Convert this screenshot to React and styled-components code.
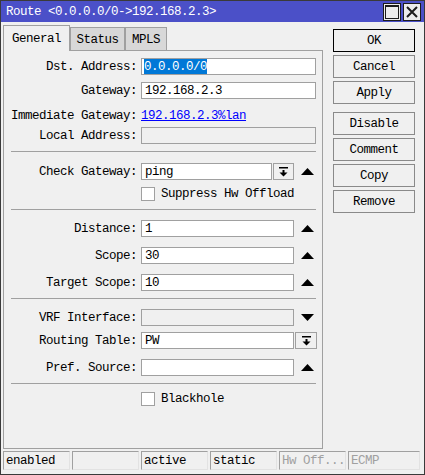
import React from "react";
import styled, { createGlobalStyle } from "styled-components";

const GlobalStyle = createGlobalStyle`
  html, body { margin: 0; padding: 0; background: #f0f0f0; }
  body { font-family: "Liberation Mono", "DejaVu Sans Mono", monospace; }
`;

const Window = styled.div`
  width: 425px;
  height: 475px;
  box-sizing: border-box;
  border: 1px solid #3a3a3a;
  background: #f0f0f0;
  display: flex;
  flex-direction: column;
  font-family: "Liberation Mono", "DejaVu Sans Mono", monospace;
  font-size: 12.5px;
  letter-spacing: -0.5px;
  color: #000;
`;

const TitleBar = styled.div`
  height: 21px;
  flex: none;
  background: #4b50c8;
  color: #fff;
  display: flex;
  align-items: center;
  padding: 0 3px 0 5px;
`;

const TitleText = styled.div`
  flex: 1;
  white-space: pre;
`;

const TitleButtons = styled.div`
  display: flex;
  gap: 2px;
  align-self: flex-start;
  margin-top: 2px;
`;

const TitleButton = styled.div`
  width: 18px;
  height: 18px;
  box-sizing: border-box;
  border: 1px solid #1c1c1c;
  background: #ececec;
  display: flex;
  align-items: center;
  justify-content: center;
`;

const Main = styled.div`
  display: flex;
  padding: 3px 0 0 2px;
  flex: none;
`;

const LeftCol = styled.div`
  width: 320px;
  display: flex;
  flex-direction: column;
`;

const Tabs = styled.div`
  display: flex;
  height: 26px;
  margin-bottom: -1px;
  align-items: flex-start;
`;

const Tab = styled.div`
  width: ${(p) => p.$w}px;
  box-sizing: border-box;
  display: flex;
  align-items: center;
  justify-content: center;
  border: 1px solid #a0a0a0;
  ${(p) =>
    p.$active
      ? `
    height: 26px;
    border-bottom: none;
    background: #f0f0f0;
    position: relative;
    z-index: 1;
  `
      : `
    height: 24px;
    margin-top: 2px;
    padding-top: 2px;
    background: #d8d8d8;
  `}
`;

const Panel = styled.div`
  height: 399px;
  box-sizing: border-box;
  border: 1px solid #a0a0a0;
  display: flex;
  flex-direction: column;
`;

const Section = styled.div`
  display: flex;
  flex-direction: column;
  padding: ${(p) => p.$pt}px 0 ${(p) => p.$pb}px;
`;

const Divider = styled.div`
  height: 1px;
  background: #a0a0a0;
  margin: 0 6px 0 7px;
`;

const Row = styled.div`
  display: grid;
  grid-template-columns: 133px auto;
  column-gap: 4px;
  align-items: center;
  height: ${(p) => p.$h || 17}px;
  margin-top: ${(p) => p.$mt || 0}px;
`;

const Label = styled.div`
  text-align: right;
  white-space: pre;
`;

const Controls = styled.div`
  display: flex;
  align-items: center;
  height: 100%;
`;

const Field = styled.div`
  width: ${(p) => p.$w}px;
  height: 17px;
  box-sizing: border-box;
  border: 1px solid #a0a0a0;
  background: ${(p) => (p.$disabled ? "#f0f0f0" : "#fff")};
  padding-left: 3px;
  display: flex;
  align-items: center;
  white-space: pre;
  overflow: hidden;
`;

const Selected = styled.span`
  align-self: stretch;
  display: flex;
  align-items: center;
  margin-left: -1px;
  background: #0078d7;
  color: #fff;
`;

const Link = styled.span`
  color: #0000ff;
  text-decoration: underline;
  white-space: pre;
`;

const DropButton = styled.div`
  width: ${(p) => p.$w}px;
  height: 17px;
  box-sizing: border-box;
  margin-left: 1px;
  border: 1px solid #a0a0a0;
  background: #f0f0f0;
  display: flex;
  align-items: center;
  justify-content: center;
`;

const ArrowSlot = styled.div`
  width: 22px;
  box-sizing: border-box;
  padding-left: 7px;
  display: flex;
  align-items: center;
`;

const CheckRow = styled.div`
  display: flex;
  align-items: center;
  gap: 6px;
`;

const CheckBox = styled.div`
  width: 14px;
  height: 14px;
  box-sizing: border-box;
  border: 1px solid #a0a0a0;
  background: #fff;
`;

const RightCol = styled.div`
  width: 82px;
  margin: 4px 0 0 10px;
  display: flex;
  flex-direction: column;
`;

const Button = styled.div`
  height: 23px;
  box-sizing: border-box;
  margin-top: ${(p) => p.$mt}px;
  border: 1px solid ${(p) => (p.$default ? "#000" : "#8a8a8a")};
  background: #f0f0f0;
  display: flex;
  align-items: center;
  justify-content: center;
`;

const StatusBar = styled.div`
  display: flex;
  gap: 2px;
  height: 19px;
  margin-top: 2px;
  padding: 0 4px 0 2px;
`;

const StatusCell = styled.div`
  width: ${(p) => (p.$grow ? "auto" : "67px")};
  flex: ${(p) => (p.$grow ? 1 : "none")};
  box-sizing: border-box;
  border: 1px solid;
  border-color: #a0a0a0 #e2e2e2 #e2e2e2 #a0a0a0;
  padding-left: 2px;
  display: flex;
  align-items: center;
  white-space: pre;
  color: ${(p) => (p.$grey ? "#a0a0a0" : "#000")};
`;

const UpArrow = () => (
  <svg width="13" height="7" viewBox="0 0 13 7">
    <polygon points="6.5,0 13,7 0,7" fill="#000" />
  </svg>
);

const DownArrow = () => (
  <svg width="13" height="7" viewBox="0 0 13 7">
    <polygon points="0,0 13,0 6.5,7" fill="#000" />
  </svg>
);

const DropIcon = () => (
  <svg width="9" height="10" viewBox="0 0 9 10">
    <rect x="0" y="0" width="9" height="1.5" fill="#000" />
    <rect x="3.5" y="3" width="2" height="3" fill="#000" />
    <polygon points="0.5,5.5 8.5,5.5 4.5,9.5" fill="#000" />
  </svg>
);

const MaxIcon = () => (
  <svg width="14" height="14" viewBox="0 0 14 14">
    <rect x="0.5" y="0.5" width="13" height="13" fill="none" stroke="#1c1c1c" />
    <rect x="0.5" y="0.5" width="13" height="1.5" fill="#1c1c1c" />
  </svg>
);

const CloseIcon = () => (
  <svg width="12" height="12" viewBox="0 0 12 12">
    <path d="M1 1 L11 11 M11 1 L1 11" stroke="#1c1c1c" strokeWidth="2" />
  </svg>
);

export default function App() {
  return (
    <>
      <GlobalStyle />
      <Window>
        <TitleBar>
          <TitleText>{"Route <0.0.0.0/0->192.168.2.3>"}</TitleText>
          <TitleButtons>
            <TitleButton><MaxIcon /></TitleButton>
            <TitleButton><CloseIcon /></TitleButton>
          </TitleButtons>
        </TitleBar>

        <Main>
          <LeftCol>
            <Tabs>
              <Tab $w={67} $active>General</Tab>
              <Tab $w={55}>Status</Tab>
              <Tab $w={42}>MPLS</Tab>
            </Tabs>
            <Panel>
              <Section $pt={7} $pb={7}>
                <Row>
                  <Label>Dst. Address:</Label>
                  <Controls>
                    <Field $w={175}><Selected>0.0.0.0/0</Selected></Field>
                  </Controls>
                </Row>
                <Row $mt={7}>
                  <Label>Gateway:</Label>
                  <Controls>
                    <Field $w={175}>192.168.2.3</Field>
                  </Controls>
                </Row>
                <Row $mt={8}>
                  <Label>Immediate Gateway:</Label>
                  <Controls>
                    <Link>192.168.2.3%lan</Link>
                  </Controls>
                </Row>
                <Row $mt={3}>
                  <Label>Local Address:</Label>
                  <Controls>
                    <Field $w={175} $disabled />
                  </Controls>
                </Row>
              </Section>
              <Divider />
              <Section $pt={11} $pb={8}>
                <Row>
                  <Label>Check Gateway:</Label>
                  <Controls>
                    <Field $w={131}>ping</Field>
                    <DropButton $w={21}><DropIcon /></DropButton>
                    <ArrowSlot><UpArrow /></ArrowSlot>
                  </Controls>
                </Row>
                <Row $mt={7} $h={14}>
                  <Label />
                  <CheckRow>
                    <CheckBox />
                    <span>Suppress Hw Offload</span>
                  </CheckRow>
                </Row>
              </Section>
              <Divider />
              <Section $pt={10} $pb={7}>
                <Row>
                  <Label>Distance:</Label>
                  <Controls>
                    <Field $w={153}>1</Field>
                    <ArrowSlot><UpArrow /></ArrowSlot>
                  </Controls>
                </Row>
                <Row $mt={10}>
                  <Label>Scope:</Label>
                  <Controls>
                    <Field $w={153}>30</Field>
                    <ArrowSlot><UpArrow /></ArrowSlot>
                  </Controls>
                </Row>
                <Row $mt={10}>
                  <Label>Target Scope:</Label>
                  <Controls>
                    <Field $w={153}>10</Field>
                    <ArrowSlot><UpArrow /></ArrowSlot>
                  </Controls>
                </Row>
              </Section>
              <Divider />
              <Section $pt={10} $pb={7}>
                <Row>
                  <Label>VRF Interface:</Label>
                  <Controls>
                    <Field $w={153} $disabled />
                    <ArrowSlot><DownArrow /></ArrowSlot>
                  </Controls>
                </Row>
                <Row $mt={6}>
                  <Label>Routing Table:</Label>
                  <Controls>
                    <Field $w={153}>PW</Field>
                    <DropButton $w={22}><DropIcon /></DropButton>
                  </Controls>
                </Row>
                <Row $mt={10}>
                  <Label>Pref. Source:</Label>
                  <Controls>
                    <Field $w={153} />
                    <ArrowSlot><UpArrow /></ArrowSlot>
                  </Controls>
                </Row>
              </Section>
              <Divider />
              <Section $pt={8} $pb={0}>
                <Row $h={14}>
                  <Label />
                  <CheckRow>
                    <CheckBox />
                    <span>Blackhole</span>
                  </CheckRow>
                </Row>
              </Section>
            </Panel>
          </LeftCol>

          <RightCol>
            <Button $mt={0} $default>OK</Button>
            <Button $mt={3}>Cancel</Button>
            <Button $mt={3}>Apply</Button>
            <Button $mt={8}>Disable</Button>
            <Button $mt={3}>Comment</Button>
            <Button $mt={3}>Copy</Button>
            <Button $mt={3}>Remove</Button>
          </RightCol>
        </Main>

        <StatusBar>
          <StatusCell>enabled</StatusCell>
          <StatusCell />
          <StatusCell>active</StatusCell>
          <StatusCell>static</StatusCell>
          <StatusCell $grey>Hw Off...</StatusCell>
          <StatusCell $grey $grow>ECMP</StatusCell>
        </StatusBar>
      </Window>
    </>
  );
}
